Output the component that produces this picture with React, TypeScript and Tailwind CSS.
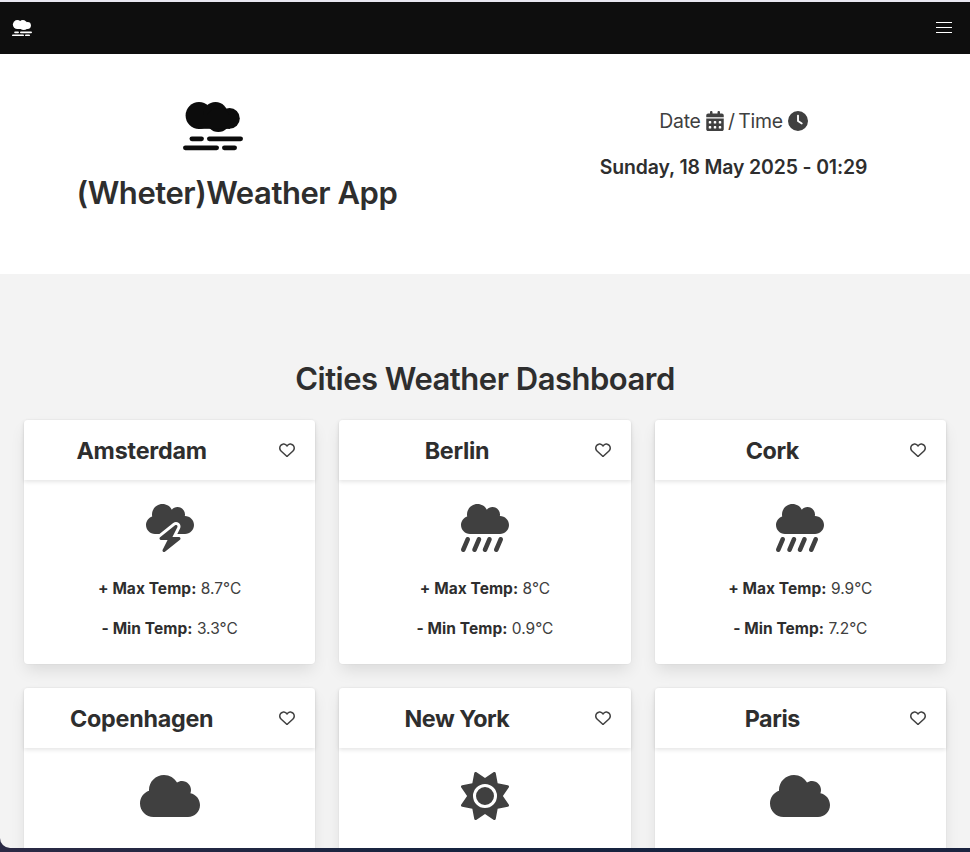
import { FaCalendarDays, FaClock, FaCloud, FaCloudBolt, FaCloudShowersHeavy, FaRegHeart, FaSun } from "react-icons/fa6";
import type { IconType } from "react-icons";

type City = { name: string; icon: IconType; max?: string; min?: string; wide?: boolean; spacing: string };

const cities: City[] = [
  { name: "Amsterdam", icon: FaCloudBolt, max: "8.7°C", min: "3.3°C", spacing: "tracking-[-0.2px]" },
  { name: "Berlin", icon: FaCloudShowersHeavy, max: "8°C", min: "0.9°C", spacing: "tracking-[-0.3px]" },
  { name: "Cork", icon: FaCloudShowersHeavy, max: "9.9°C", min: "7.2°C", spacing: "tracking-[-0.4px]" },
  { name: "Copenhagen", icon: FaCloud, wide: true, spacing: "tracking-[-0.25px]" },
  { name: "New York", icon: FaSun, spacing: "tracking-[-0.5px]" },
  { name: "Paris", icon: FaCloud, wide: true, spacing: "tracking-[-0.4px]" },
];

function Logo({ className, bar = 4.8 }: { className: string; bar?: number }) {
  const r = bar / 2;
  return (
    <svg viewBox="0 0 60 49" className={className} fill="currentColor">
      <circle cx="16" cy="13.5" r="13.4" />
      <circle cx="32.5" cy="12.5" r="12.4" />
      <circle cx="46.5" cy="16.4" r="10.3" />
      <circle cx="35.3" cy="18" r="12" />
      <rect x="15" y="13" width="32" height="13.8" />
      <rect x="6.5" y={36.8 - r} width="14.4" height={bar} rx={r} />
      <rect x="24" y={36.8 - r} width="36" height={bar} rx={r} />
      <rect x="0" y={45.8 - r} width="36" height={bar} rx={r} />
      <rect x="39" y={45.8 - r} width="15" height={bar} rx={r} />
    </svg>
  );
}

function Temp({ label, value, className }: { label: string; value: string; className: string }) {
  return (
    <p className={`${className} text-[15.5px] leading-6 text-[#404040]`}>
      <strong className="font-bold tracking-[0.05px] text-[#2e2e2e]">{label}</strong> {value}
    </p>
  );
}

function Card({ city }: { city: City }) {
  const Icon = city.icon;
  return (
    <article className="h-[244px] rounded bg-white shadow-[0_8px_16px_-2px_rgba(10,10,10,0.1),0_0_0_1px_rgba(10,10,10,0.02)]">
      <header className="flex h-[60px] items-center shadow-[0_2px_4px_rgba(10,10,10,0.1)]">
        <h3 className={`flex-1 pt-0.5 pr-2 text-center text-[23.3px] leading-9 font-bold text-[#2e2e2e] ${city.spacing}`}>{city.name}</h3>
        <button className="mr-5 ml-3 text-[#404040]" aria-label="Favourite">
          <FaRegHeart size={16} />
        </button>
      </header>
      <div className="flex flex-col items-center pt-6">
        <Icon className={city.wide ? "h-12 w-[60px] text-[#404040]" : "size-12 text-[#404040]"} />
        {city.max && <Temp label="+ Max Temp:" value={city.max} className="mt-[25px]" />}
        {city.min && <Temp label="- Min Temp:" value={city.min} className="mt-4" />}
      </div>
    </article>
  );
}

export default function App() {
  return (
    <div className="h-[852px] overflow-hidden bg-linear-to-r from-[#2b2a45] via-[#14233f] to-[#1b2440] font-['Inter',sans-serif]">
      <div className="h-[848px] overflow-hidden rounded-bl-[10px] bg-[#f3f3f3]">
        <div className="h-0.5 bg-[#e8e7f0]" />
        <nav className="flex h-[52px] items-center justify-between bg-[#0e0e0e] pr-[18px] pl-3 text-white">
          <Logo className="h-[16.5px] w-5" bar={5.6} />
          <div className="mb-0.5 flex w-4 flex-col gap-1">
            <span className="h-px bg-white" />
            <span className="h-px bg-white" />
            <span className="h-px bg-white" />
          </div>
        </nav>
        <section className="grid h-[220px] grid-cols-[474px_1fr] bg-white">
          <div className="flex flex-col items-center pt-12">
            <Logo className="mr-[49px] h-[49px] w-[60px] text-[#0c0c0c]" />
            <h1 className="mt-[19px] text-[31px] leading-[45px] font-semibold tracking-[-0.46px] text-[#2e2e2e]">(Wheter)Weather App</h1>
          </div>
          <div className="flex flex-col items-center pt-[52px] pl-[23px]">
            <p className="flex items-center text-[19.4px] leading-[30px] tracking-[-0.3px] text-[#404040]">
              <span>Date</span>
              <FaCalendarDays className="mr-[3.5px] ml-1" size={20} />
              <span className="[word-spacing:-1.5px]">/ Time</span>
              <FaClock className="ml-[5px]" size={20} />
            </p>
            <p className="mt-4 text-[19.4px] leading-[30px] font-semibold tracking-[-0.12px] text-[#2e2e2e]">Sunday, 18 May 2025 - 01:29</p>
          </div>
        </section>
        <main className="px-6 pt-[84px]">
          <h2 className="text-center text-[31px] leading-[42px] font-semibold tracking-[-0.5px] text-[#2e2e2e]">Cities Weather Dashboard</h2>
          <div className="mt-5 grid grid-cols-3 gap-6">
            {cities.map((city) => (
              <Card key={city.name} city={city} />
            ))}
          </div>
        </main>
      </div>
    </div>
  );
}
